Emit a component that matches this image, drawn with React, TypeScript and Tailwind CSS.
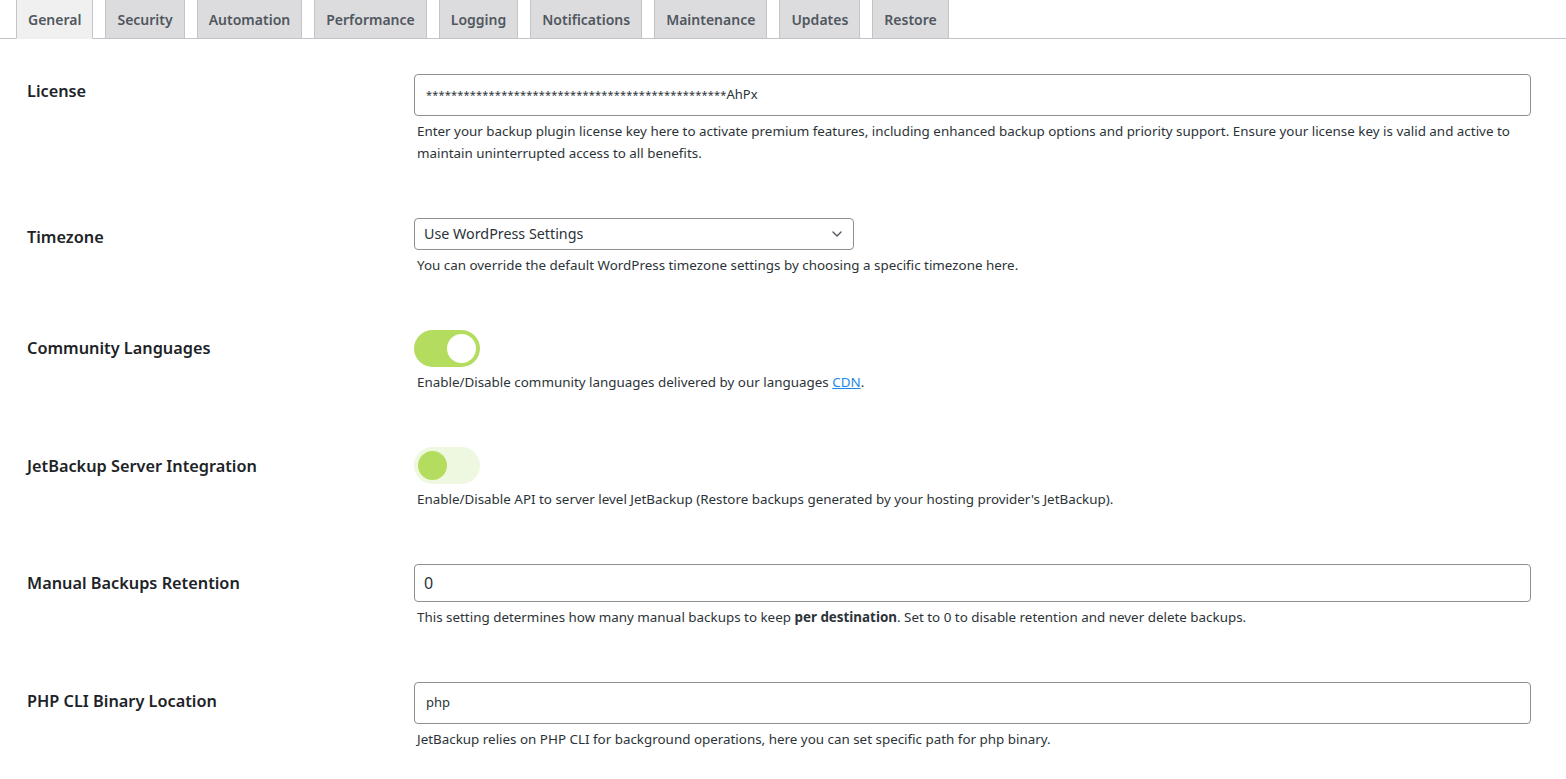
import { ChevronDown } from "lucide-react";

const tabs = [
  "General",
  "Security",
  "Automation",
  "Performance",
  "Logging",
  "Notifications",
  "Maintenance",
  "Updates",
  "Restore",
];

function Toggle({ on }: { on: boolean }) {
  return (
    <div
      className={
        on
          ? "flex h-[37px] w-[66px] items-center justify-end rounded-full bg-[#b4dc5f] pr-[4px]"
          : "flex h-[37px] w-[66px] items-center justify-start rounded-full bg-[#eef7df] pl-[4px]"
      }
    >
      <div
        className={
          on
            ? "h-[29px] w-[29px] rounded-full bg-white"
            : "h-[29px] w-[29px] rounded-full bg-[#b4dc5f]"
        }
      />
    </div>
  );
}

function Row({
  label,
  labelTop,
  children,
  description,
}: {
  label: string;
  labelTop: string;
  children: React.ReactNode;
  description: React.ReactNode;
}) {
  return (
    <div className="flex items-start pb-[54px]">
      <div className={"w-[414px] shrink-0 pl-[27px] " + labelTop}>
        <span className="text-[16.3px] leading-[24px] font-semibold text-[#1d2327]">
          {label}
        </span>
      </div>
      <div className="flex-1 pr-[35px]">
        {children}
        <p className="mt-[4px] pl-[3px] text-[13.4px] leading-[22px] text-[#2c3338]">
          {description}
        </p>
      </div>
    </div>
  );
}

export default function App() {
  return (
    <div
      className="min-h-screen bg-white"
      style={{ fontFamily: '"Noto Sans", "Open Sans", sans-serif' }}
    >
      <div className="flex h-[39px] items-end gap-[12px] border-b border-[#c3c4c7] pl-[16px]">
        {tabs.map((t, i) => (
          <div
            key={t}
            className={
              i === 0
                ? "-mb-px flex h-[39px] items-center border border-b-[#f0f0f1] border-t-0 border-[#c3c4c7] bg-[#f0f0f1] px-[11px] text-[14px] font-semibold text-[#50575e]"
                : "-mb-px flex h-[39px] items-center border border-t-0 border-[#c3c4c7] bg-[#dcdcde] px-[11px] text-[14px] font-semibold text-[#50575e]"
            }
          >
            {t}
          </div>
        ))}
      </div>

      <div className="pt-[35px]">
        <Row
          label="License"
          labelTop="mt-[5px]"
          description={
            <>
              Enter your backup plugin license key here to activate premium features, including
              enhanced backup options and priority support. Ensure your license key is valid and
              active to maintain uninterrupted access to all benefits.
            </>
          }
        >
          <div className="flex h-[42px] items-center rounded-[4px] border border-[#8c8f94] px-[11px] text-[13px] text-[#2c3338]">
            <span className="text-[11px] tracking-[0.2px]">
              {"*".repeat(48)}
            </span>
            <span>AhPx</span>
          </div>
        </Row>

        <Row
          label="Timezone"
          labelTop="mt-[7px]"
          description="You can override the default WordPress timezone settings by choosing a specific timezone here."
        >
          <div className="flex h-[32px] w-[440px] items-center justify-between rounded-[4px] border border-[#8c8f94] pl-[9px] pr-[8px] text-[14.3px] text-[#2c3338]">
            <span>Use WordPress Settings</span>
            <ChevronDown className="h-[16px] w-[16px] text-[#50575e]" strokeWidth={2} />
          </div>
        </Row>

        <Row
          label="Community Languages"
          labelTop="mt-[6px]"
          description={
            <>
              Enable/Disable community languages delivered by our languages{" "}
              <a className="text-[#1e88e5] underline">CDN</a>.
            </>
          }
        >
          <Toggle on />
        </Row>

        <Row
          label="JetBackup Server Integration"
          labelTop="mt-[7px]"
          description="Enable/Disable API to server level JetBackup (Restore backups generated by your hosting provider's JetBackup)."
        >
          <Toggle on={false} />
        </Row>

        <Row
          label="Manual Backups Retention"
          labelTop="mt-[7px]"
          description={
            <>
              This setting determines how many manual backups to keep{" "}
              <strong className="font-bold">per destination</strong>. Set to 0 to disable retention
              and never delete backups.
            </>
          }
        >
          <div className="flex h-[38px] items-center rounded-[4px] border border-[#8c8f94] px-[9px] text-[16px] text-[#2c3338]">
            0
          </div>
        </Row>

        <Row
          label="PHP CLI Binary Location"
          labelTop="mt-[7px]"
          description="JetBackup relies on PHP CLI for background operations, here you can set specific path for php binary."
        >
          <div className="flex h-[42px] items-center rounded-[4px] border border-[#8c8f94] px-[11px] text-[13px] text-[#2c3338]">
            php
          </div>
        </Row>
      </div>
    </div>
  );
}
